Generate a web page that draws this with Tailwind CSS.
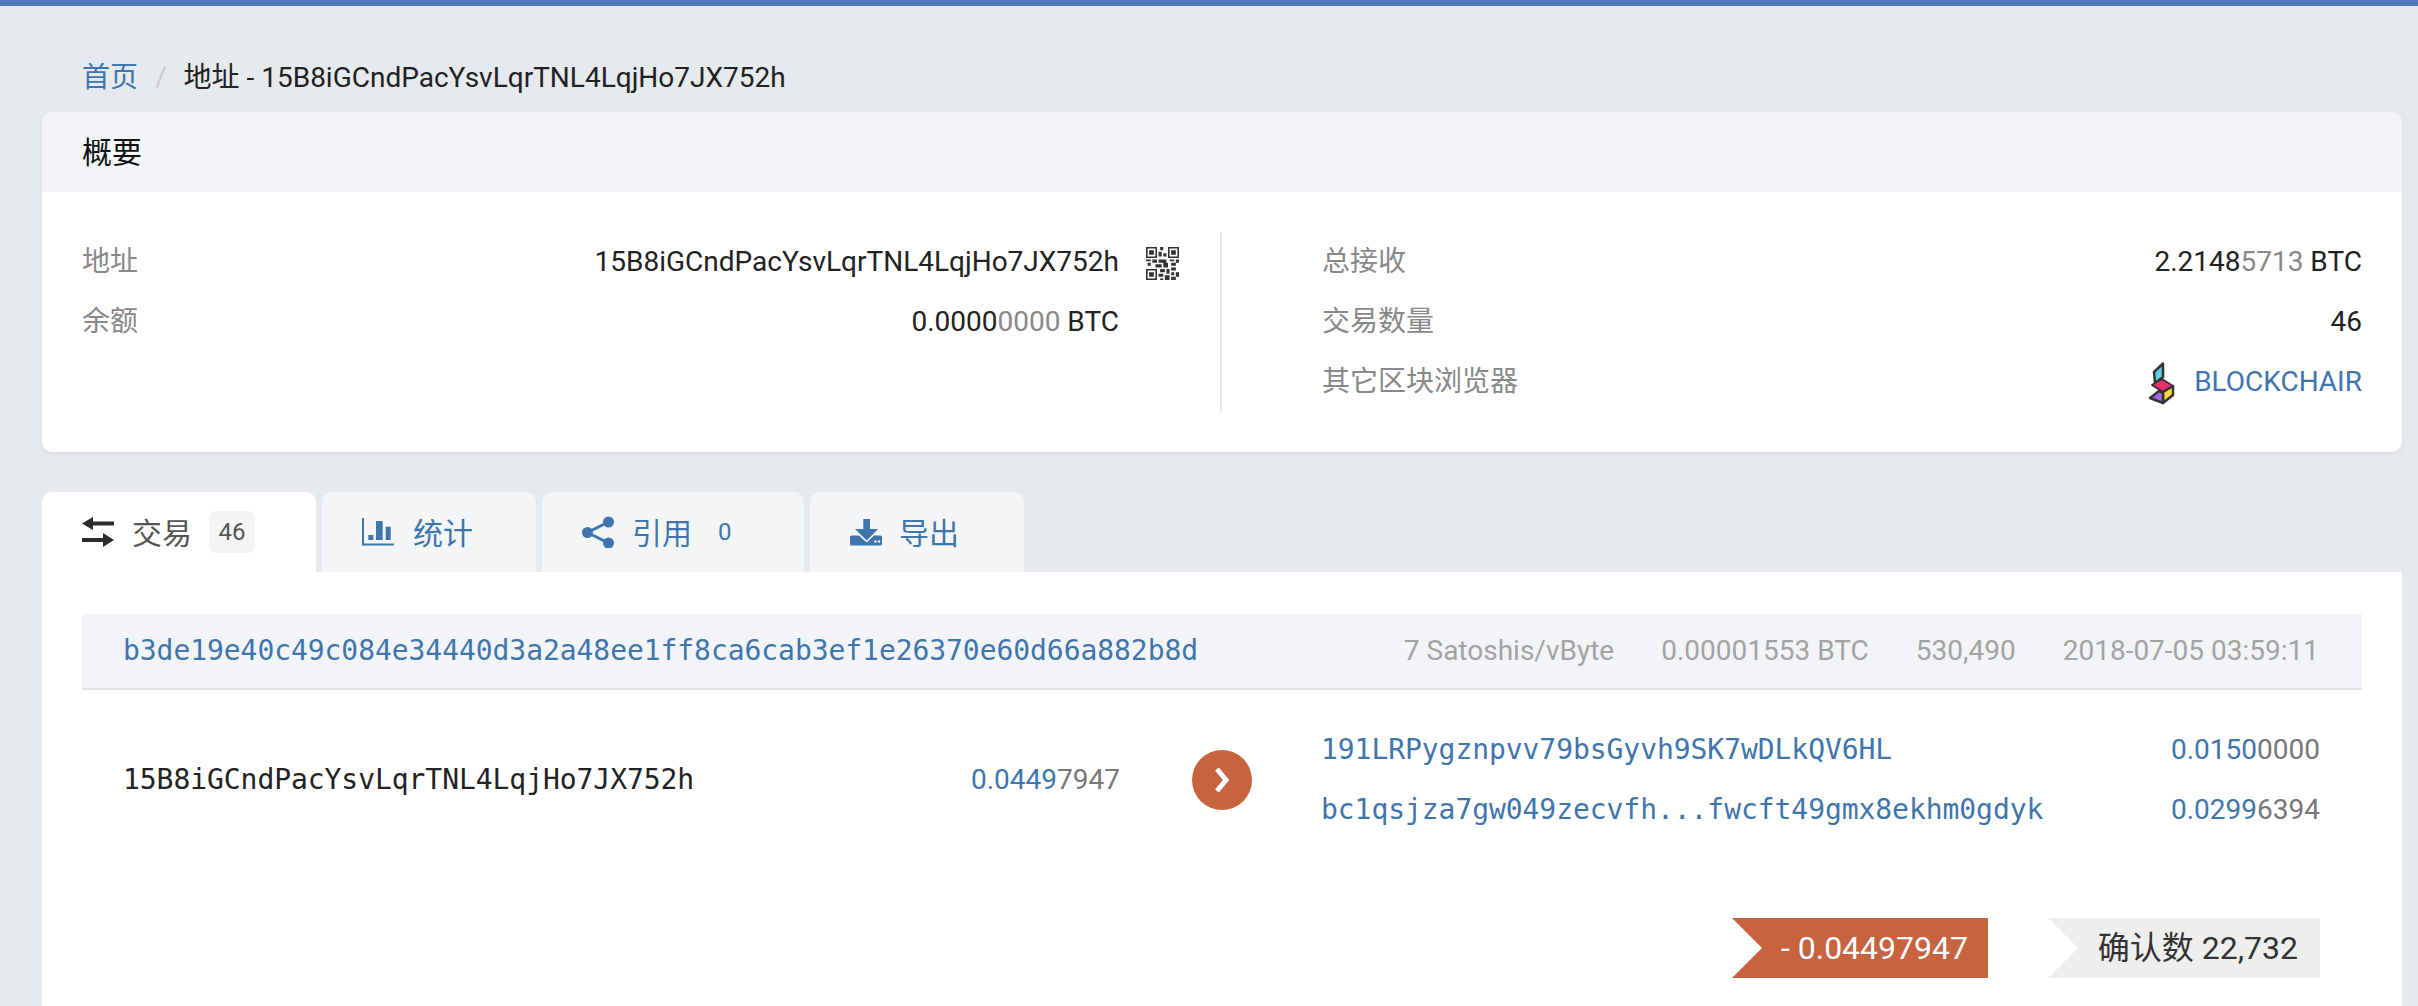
<!DOCTYPE html>
<html lang="zh-CN">
  <head>
    <meta charset="UTF-8" />
    <title>地址 - 15B8iGCndPacYsvLqrTNL4LqjHo7JX752h</title>
    <script src="https://cdn.jsdelivr.net/npm/@tailwindcss/browser@4"></script>
  </head>
  <body class="h-[1006px] overflow-hidden bg-[#e6e9ee] border-t-[6px] border-[#4a78bd] text-[28px] text-[#333] font-['Roboto','Noto_Sans_CJK_SC',sans-serif]">
    <div class="pl-[42px] pr-[16px]">
      <!-- 面包屑 -->
      <nav class="h-[106px] pl-[40px] pt-[38px] flex items-center gap-[17px] leading-none">
        <a class="text-[#3f75ad]">首页</a>
        <span class="text-[#ccc]">/</span>
        <span class="text-[#222]">地址 - 15B8iGCndPacYsvLqrTNL4LqjHo7JX752h</span>
      </nav>

      <!-- 概要 -->
      <section class="h-[340px] bg-white rounded-[10px] shadow-[0_2px_4px_rgba(0,0,0,0.06)] overflow-hidden">
        <div class="h-[80px] bg-[#f2f4f8] pl-[40px] flex items-center text-[30px] text-[#111]">概要</div>
        <div class="flex pt-[40px] px-[40px]">
          <div class="w-[1140px] h-[180px] border-r-2 border-[#e8e8e8] pr-[101px]">
            <div class="h-[60px] flex items-center justify-between">
              <span class="text-[#888]">地址</span>
              <span class="relative text-[#222]">15B8iGCndPacYsvLqrTNL4LqjHo7JX752h
                <svg class="absolute left-[calc(100%+27px)] top-[6px] w-[33px] h-[33px]" viewBox="0 0 21 21" fill="#333"><path fill-rule="evenodd" d="M0 0h7v7H0zM1 1v5h5V1zM2 2h3v3H2zM14 0h7v7h-7zM15 1v5h5V1zM16 2h3v3h-3zM0 14h7v7H0zM1 15v5h5v-5zM2 16h3v3H2zM9 0h2v2H9zM8 3h2v3H8zM11 4h2v2h-2zM0 8h3v1H0zM4 8h3v2H4zM8 8h5v2H8zM15 8h3v1h-3zM19 8h2v2h-2zM1 10h2v2H1zM6 11h4v2H6zM11 10h3v3h-3zM16 10h3v2h-3zM9 14h3v2H9zM13 14h2v3h-2zM16 13h3v2h-3zM8 17h3v2H8zM12 18h3v3h-3zM16 16h2v2h-2zM19 16h2v3h-2zM16 19h3v2h-3zM9 20h2v1H9z"/></svg>
              </span>
            </div>
            <div class="h-[60px] flex items-center justify-between">
              <span class="text-[#888]">余额</span>
              <span class="text-[#222]">0.0000<span class="text-[#888]">0000</span> BTC</span>
            </div>
          </div>
          <div class="flex-1 pl-[100px]">
            <div class="h-[60px] flex items-center justify-between">
              <span class="text-[#888]">总接收</span>
              <span class="text-[#222]">2.2148<span class="text-[#888]">5713</span> BTC</span>
            </div>
            <div class="h-[60px] flex items-center justify-between">
              <span class="text-[#888]">交易数量</span>
              <span class="text-[#222]">46</span>
            </div>
            <div class="h-[60px] flex items-center justify-between">
              <span class="text-[#888]">其它区块浏览器</span>
              <a class="flex items-center gap-[18px] text-[#3f75ad]">
                <svg class="w-[28px] h-[43px] mt-[2px]" viewBox="0 0 28 43">
                  <path d="M6 10 15 1.500V15l-8 6z" fill="#5fd0e6" stroke="#333" stroke-width="2.500" stroke-linejoin="round"/>
                  <path d="M4 23l10-6 11 7-10 6z" fill="#e8306f" stroke="#333" stroke-width="2" stroke-linejoin="round"/>
                  <path d="M15 30l10-6v9l-10 8z" fill="#f8dc3c" stroke="#333" stroke-width="2.500" stroke-linejoin="round"/>
                  <path d="M2 36l9-7 4 2v10z" fill="#9a6ae0" stroke="#333" stroke-width="2.500" stroke-linejoin="round"/>
                </svg>
                BLOCKCHAIR
              </a>
            </div>
          </div>
        </div>
      </section>

      <!-- タブ -->
      <div class="mt-[40px] flex gap-[6px] h-[80px] text-[#3f75ad]">
        <div class="w-[274px] bg-white rounded-t-[10px] flex items-center pl-[40px] text-[#555]">
          <svg class="w-[32px] h-[31px] shrink-0" viewBox="0 0 32 31" fill="#2b2b2b"><path d="M0 6.5 11 0v4.5h21v4H11V13zM32 23l-11 7v-5H0v-4h21v-5z"/></svg>
          <span class="ml-[18px] mt-[2px] text-[30px]">交易</span>
          <span class="ml-[17px] w-[46px] h-[42px] rounded-[8px] bg-[#f4f4f5] text-[24px] flex items-center justify-center">46</span>
        </div>
        <div class="w-[214px] bg-[#f4f5f6] rounded-t-[10px] flex items-center pl-[40px]">
          <svg class="w-[32px] h-[28px] shrink-0" viewBox="0 0 32 28" fill="currentColor"><path d="M0 0h2v25.500h30v2H0zM6.300 17h5v5h-5zM14 3h6.700v19H14zM23.700 8.700h5V22h-5z"/></svg>
          <span class="ml-[19px] mt-[2px] text-[30px]">统计</span>
        </div>
        <div class="w-[262px] bg-[#f4f5f6] rounded-t-[10px] flex items-center pl-[40px]">
          <svg class="w-[32px] h-[32px] shrink-0" viewBox="0 0 32 32" fill="currentColor"><circle cx="5.500" cy="16.500" r="5.500"/><circle cx="26.500" cy="6" r="5.500"/><circle cx="26.500" cy="27" r="5.500"/><path d="M26.500 6 5.500 16.500l21 10.500" fill="none" stroke="currentColor" stroke-width="3"/></svg>
          <span class="ml-[18px] mt-[2px] text-[30px]">引用</span>
          <span class="ml-[26px] text-[24px]">0</span>
        </div>
        <div class="w-[214px] bg-[#f4f5f6] rounded-t-[10px] flex items-center pl-[40px]">
          <svg class="w-[32px] h-[28px] shrink-0" viewBox="0 0 32 28" fill="currentColor"><path d="M13.300 1H20v10h8L16.700 22.500 5 11h8.300zM0 19a1.500 1.500 0 0 1 1.500-1.500H9l7.700 7 7.300-7h6.500A1.500 1.500 0 0 1 32 19v7a1.500 1.500 0 0 1-1.500 1.500h-29A1.500 1.500 0 0 1 0 26z"/><circle cx="25.500" cy="23.500" r="1.200" fill="#fff"/><circle cx="29" cy="23.500" r="1.200" fill="#fff"/></svg>
          <span class="ml-[17px] mt-[2px] text-[30px]">导出</span>
        </div>
      </div>

      <!-- 取引 -->
      <section class="bg-white h-[500px] pt-[42px] px-[40px]">
        <div class="h-[76px] w-[2280px] pl-[41px] pr-[43px] bg-[#f2f4f8] border-b-2 border-[#dfe1e5] flex items-center justify-between">
          <a class="font-['DejaVu_Sans_Mono',monospace] text-[28px] text-[#3f75ad] tracking-[-0.06px]">b3de19e40c49c084e34440d3a2a48ee1ff8ca6cab3ef1e26370e60d66a882b8d</a>
          <div class="flex gap-[47px] text-[#a3a3a3]">
            <span>7 Satoshis/vByte</span>
            <span>0.00001553 BTC</span>
            <span>530,490</span>
            <span>2018-07-05 03:59:11</span>
          </div>
        </div>

        <div class="flex w-[2280px] pl-[41px] pr-[42px] pt-[30px] h-[150px]">
          <div class="w-[997px] h-[120px] flex items-center justify-between">
            <span class="font-['DejaVu_Sans_Mono',monospace] text-[28px] text-[#222] tracking-[-0.06px]">15B8iGCndPacYsvLqrTNL4LqjHo7JX752h</span>
            <span class="text-[#3f75ad]">0.0449<span class="text-[#777]">7947</span></span>
          </div>
          <div class="ml-[72px] mr-[69px] h-[120px] flex items-center">
            <span class="w-[60px] h-[60px] rounded-full bg-[#c8633f] flex items-center justify-center">
              <svg class="w-[20px] h-[26px]" viewBox="0 0 20 26"><path d="M5 2l9 11-9 11" fill="none" stroke="#fff" stroke-width="5"/></svg>
            </span>
          </div>
          <div class="flex-1">
            <div class="h-[60px] flex items-center justify-between">
              <a class="font-['DejaVu_Sans_Mono',monospace] text-[28px] text-[#3f75ad] tracking-[-0.06px]">191LRPygznpvv79bsGyvh9SK7wDLkQV6HL</a>
              <span class="text-[#3f75ad]">0.0150<span class="text-[#777]">0000</span></span>
            </div>
            <div class="h-[60px] flex items-center justify-between">
              <a class="font-['DejaVu_Sans_Mono',monospace] text-[28px] text-[#3f75ad] tracking-[-0.06px]">bc1qsjza7gw049zecvfh...fwcft49gmx8ekhm0gdyk</a>
              <span class="text-[#3f75ad]">0.0299<span class="text-[#777]">6394</span></span>
            </div>
          </div>
        </div>

        <div class="mt-[78px] w-[2238px] flex justify-end gap-[60px]">
          <span class="w-[256px] h-[60px] bg-[#c8633f] text-white text-[32px] flex items-center justify-end pr-[20px] [clip-path:polygon(0_0,100%_0,100%_100%,0_100%,30px_50%)]">- 0.04497947</span>
          <span class="w-[272px] h-[60px] bg-[#eeeeee] text-[#333] text-[32px] flex items-center justify-end pr-[22px] [clip-path:polygon(0_0,100%_0,100%_100%,0_100%,30px_50%)]">确认数 22,732</span>
        </div>
      </section>
    </div>
  </body>
</html>
